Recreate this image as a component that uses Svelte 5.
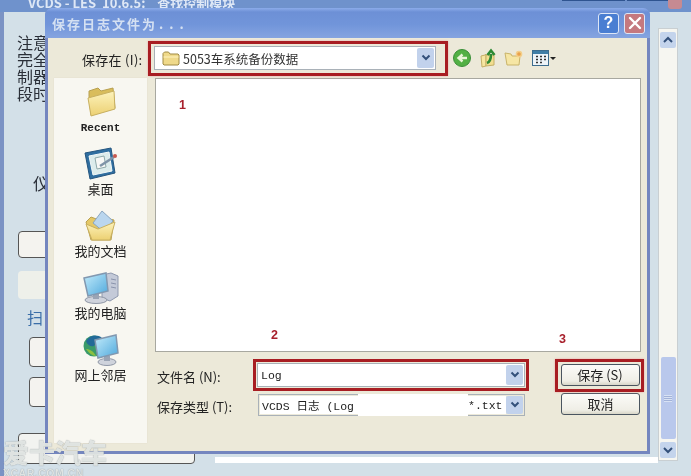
<script lang="ts">
  const places = [
    { id: "recent", label: "Recent" },
    { id: "desktop", label: "桌面" },
    { id: "docs", label: "我的文档" },
    { id: "pc", label: "我的电脑" },
    { id: "net", label: "网上邻居" },
  ]
</script>

<div class="screen">
  <!-- window behind the dialog -->
  <div class="backwin">
    <div class="backtitle">
      <span class="backname">VCDS - LES  10.6.5:    查找控制模块</span>
      <span class="backbtns"><i></i><i></i></span>
      <span class="backclose"></span>
    </div>
    <div class="backbody">
      <div class="backleft">
        <p class="note">注意<br />完全<br />制器<br />段时</p>
        <p class="instr">仪</p>
        <div class="bbtn first"></div>
        <div class="bbox"></div>
        <div class="scan">
          <span class="scanlabel">扫</span>
          <div class="bbtn small"></div>
          <div class="bbtn small"></div>
        </div>
        <div class="bottombtns">
          <div class="bbtn wide"></div>
          <div class="wide2"></div>
        </div>
      </div>
      <div class="vscroll">
        <div class="sbtn"><svg width="12" height="10" viewBox="0 0 12 10"><path d="M2 7 6 3l4 4" fill="none" stroke="#33507a" stroke-width="2"/></svg></div>
        <div class="strack"></div>
        <div class="sthumb"><span></span></div>
        <div class="sbtn"><svg width="12" height="10" viewBox="0 0 12 10"><path d="M2 3l4 4 4-4" fill="none" stroke="#33507a" stroke-width="2"/></svg></div>
      </div>
    </div>
  </div>

  <!-- save dialog -->
  <div class="dialog">
    <div class="dtitle">
      <span class="dname">保存日志文件为<span class="dots">...</span></span>
      <span class="help">?</span>
      <span class="close">
        <svg width="14" height="14" viewBox="0 0 14 14"><path d="M2 2l10 10M12 2 2 12" stroke="#fff" stroke-width="2.4" stroke-linecap="round"/></svg>
      </span>
    </div>
    <div class="client">
      <div class="toprow">
        <span class="savein">保存在 (I):</span>
        <div class="mark topmark">
          <div class="combo">
            <svg class="smallfolder" width="18" height="15" viewBox="0 0 18 15"><path d="M1 4V2.500L2.500 1h4L8 3h8l1 1v9l-1 1H2l-1-1z" fill="#efd98a" stroke="#a08a45"/><path d="M1.500 6h15" stroke="#fff3c0"/></svg>
            <span class="folder">5053车系统备份数据</span>
            <span class="arrow"><svg width="10" height="8" viewBox="0 0 10 8"><path d="M1.500 1.500 5 5l3.500-3.500" fill="none" stroke="#33507a" stroke-width="2"/></svg></span>
          </div>
        </div>
        <div class="tools">
          <svg width="20" height="20" viewBox="0 0 20 20"><circle cx="10" cy="10" r="8.500" fill="#52b044" stroke="#3a8f38"/><path d="M15 10H8m2.500-3.500L6.500 10l4 3.500" fill="none" stroke="#e8f4d8" stroke-width="2.400"/></svg>
          <svg width="20" height="20" viewBox="0 0 20 20"><path d="M3 8l4-1 1-1v12l-4 1z" fill="#f6e6a0" stroke="#c4ae66"/><path d="M8 7h8v10l-8 1z" fill="#f2de90" stroke="#c4ae66"/><path d="M9 15c3-1 4-4 4-9M9.500 7 13 2.500 16.500 7" fill="none" stroke="#2c8a34" stroke-width="2.600"/></svg>
          <svg width="20" height="18" viewBox="0 0 20 18"><path d="M1 4l6 1 1 2h8l-1 9H3z" fill="#f6e6a4" stroke="#c9b46a"/><circle cx="15" cy="5" r="2.600" fill="#e9a14a" stroke="#f4cf8a" stroke-width="1.500"/></svg>
          <span class="viewbtn">
            <svg width="17" height="16" viewBox="0 0 17 16"><rect x="0.500" y="0.500" width="16" height="15" fill="#eef4f8" stroke="#3c6c8e"/><rect x="1" y="1" width="15" height="3" fill="#3f7ea6"/><path d="M4 6.500h2m2 0h2m2 0h2M4 9.500h2m2 0h2m2 0h2M4 12.500h2m2 0h2" stroke="#333" stroke-width="1.400"/></svg>
            <b></b>
          </span>
        </div>
      </div>

      <div class="mainrow">
        <div class="sidebar">
          {#each places as place (place.id)}
            <div class="place">
              <svg width="36" height="33" viewBox="0 0 36 33">
                <defs>
                  <linearGradient id={`fold-${place.id}`} x1="0" y1="0" x2="0" y2="1">
                    <stop offset="0" stop-color="#fdf3bc" />
                    <stop offset="1" stop-color="#ecd072" />
                  </linearGradient>
                  <linearGradient id={`scr-${place.id}`} x1="0" y1="0" x2="1" y2="1">
                    <stop offset="0" stop-color="#c4ecfb" />
                    <stop offset="1" stop-color="#4ea8dc" />
                  </linearGradient>
                </defs>
                {#if place.id === "recent"}
                  <path d="M6 11 6 6l9-3 3 3 12-3 2 20-24 7z" fill="#d9bd5c" stroke="#b8a050"/>
                  <path d="M5 13 31 6l1 18-24 7z" fill={`url(#fold-${place.id})`} stroke="#c8b060"/>
                {:else if place.id === "desktop"}
                  <path d="M2 6 28 1l4 25-25 6z" fill="#2f6ea0" stroke="#24557f"/>
                  <path d="M6 9 26 5l3 19-19 4z" fill="#dcecec" stroke="#f2f8f8"/>
                  <path d="M12 11l9-2 2 11-9 2z" fill="#f7f8f6" stroke="#8fa9aa"/>
                  <path d="M17 19 31 10" stroke="#7f94a8" stroke-width="2.600"/>
                  <circle cx="32" cy="9" r="2" fill="#c8594f"/>
                {:else if place.id === "docs"}
                  <path d="M3 13 8 8l8 3 2-3 13 3-3 20H8z" fill="#e5c866" stroke="#b9a050"/>
                  <path d="M10 14 19 2l11 10-9 11z" fill="#bad6ee" stroke="#8aa6c0"/>
                  <path d="M3 15l12 5 17-7-5 18H9z" fill={`url(#fold-${place.id})`} stroke="#c8b060"/>
                {:else if place.id === "pc"}
                  <path d="M19 4l9-2 7 3v20l-8 5-8-3z" fill="#c4cad8" stroke="#8f99ae"/>
                  <path d="M28 8l5 1m-5 3 5 1m-5 3 5 1" stroke="#8a94ac"/>
                  <ellipse cx="13" cy="29" rx="11" ry="3.500" fill="#cfd3dc" stroke="#8f97a6"/>
                  <path d="M10 23h6v5h-6z" fill="#9aa4b4"/>
                  <path d="M1 7 23 2l2 18-20 5z" fill={`url(#scr-${place.id})`} stroke="#8298b0" stroke-width="1.500"/>
                {:else}
                  <circle cx="11" cy="13" r="10.500" fill="#3a9a6a"/>
                  <path d="M3 8c4-6 11-7 16-3-2 5-6 3-8 8-3 1-7-1-8-5z" fill="#226a98"/>
                  <path d="M3 16c3 4 6 7 10 7-3-5-6-7-10-7z" fill="#8cc040"/>
                  <ellipse cx="24" cy="29" rx="9" ry="3.500" fill="#cfd3dc" stroke="#8f97a6"/>
                  <path d="M21 23h6v5h-6z" fill="#9aa4b4"/>
                  <path d="M12 7 33 2l2 18-20 5z" fill={`url(#scr-${place.id})`} stroke="#8298b0" stroke-width="1.500"/>
                {/if}
              </svg>
              <span class:mono={place.id === "recent"}>{place.label}</span>
            </div>
          {/each}
        </div>

        <div class="rightcol">
          <div class="filelist"></div>
          <div class="form">
            <div class="fields">
              <span class="flabel">文件名 (N):</span>
              <div class="combo namecombo outlined">
                <span class="mono val">Log</span>
                <span class="arrow"><svg width="10" height="8" viewBox="0 0 10 8"><path d="M1.500 1.500 5 5l3.500-3.500" fill="none" stroke="#33507a" stroke-width="2"/></svg></span>
              </div>
              <span class="flabel">保存类型 (T):</span>
              <div class="combo typecombo">
                <span class="mono val">VCDS 日志 (Log</span>
                <span class="patch"></span>
                <span class="mono ext">*.txt</span>
                <span class="arrow"><svg width="10" height="8" viewBox="0 0 10 8"><path d="M1.500 1.500 5 5l3.500-3.500" fill="none" stroke="#33507a" stroke-width="2"/></svg></span>
              </div>
            </div>
            <div class="actions">
              <div class="mark savemark"><button class="xpbtn">保存 (S)</button></div>
              <button class="xpbtn">取消</button>
            </div>
          </div>
        </div>
      </div>
    </div>
  </div>

  <span class="num n1">1</span>
  <span class="num n2">2</span>
  <span class="num n3">3</span>

  <div class="watermark">
    <div class="wm1">爱卡汽车</div>
    <div class="wm2">XCAR.COM.CN</div>
  </div>
</div>

<style>
  :global(body) {
    margin: 0;
    background: #d3e0e8;
  }
  .screen {
    position: relative;
    width: 691px;
    height: 476px;
    overflow: hidden;
    font-family: "Noto Sans CJK SC", "Noto Sans", sans-serif;
    font-size: 12.500px;
    color: #222;
    filter: blur(0.4px);
  }
  .mono {
    font-family: "Liberation Mono", "Noto Sans CJK SC", monospace;
  }

  /* back window */
  .backwin {
    height: 476px;
    display: flex;
    flex-direction: column;
    background: #d3e0e8;
  }
  .backtitle {
    height: 12px;
    background: #6f92cc;
    display: flex;
    align-items: flex-end;
    flex: none;
    color: #dfe8f6;
    overflow: hidden;
  }
  .backname {
    padding-left: 28px;
    line-height: 14px;
    height: 15px;
    white-space: pre;
    font-size: 13px;
    font-weight: 700;
    transform: translateY(-1px);
  }
  .backbtns {
    position: absolute;
    left: 562px;
    top: 0;
    display: flex;
    gap: 2px;
  }
  .backbtns i {
    width: 63px;
    height: 1px;
    background: #2f5490;
  }
  .backbtns i + i {
    width: 44px;
  }
  .backclose {
    position: absolute;
    left: 668px;
    top: 0;
    width: 14px;
    height: 9px;
    background: #c68a92;
    border-radius: 0 0 3px 3px;
  }
  .backbody {
    flex: 1;
    display: flex;
    border-left: 4px solid #7b93c4;
    min-height: 0;
  }
  .backleft {
    width: 654px;
    padding: 22px 0 0 13px;
    box-sizing: border-box;
  }
  .note {
    margin: 0;
    font-size: 16px;
    line-height: 17px;
    color: #2a2f38;
  }
  .instr {
    margin: 71px 0 0 16px;
    font-size: 17px;
    line-height: 20px;
    color: #2a2f38;
  }
  .bbtn {
    background: #f4f3ef;
    border: 1px solid #555;
    border-radius: 4px;
    box-sizing: border-box;
  }
  .first {
    margin: 38px 0 0 1px;
    width: 100px;
    height: 27px;
  }
  .bbox {
    margin: 13px 0 0 1px;
    width: 100px;
    height: 28px;
    background: #eef0ea;
    border-radius: 4px;
  }
  .scan {
    margin: 8px 0 0 1px;
  }
  .scanlabel {
    display: block;
    margin-left: 9px;
    font-size: 16px;
    line-height: 20px;
    color: #3a6ea8;
  }
  .small {
    width: 60px;
    height: 30px;
    margin: 10px 0 0 11px;
  }
  .bottombtns {
    display: flex;
    gap: 20px;
    margin: 26px 0 0 1px;
  }
  .wide {
    width: 177px;
    height: 31px;
    background: #f2f3f0;
  }
  .wide2 {
    flex: 1;
    height: 6px;
    margin-top: 24px;
    background: #fff;
  }

  .vscroll {
    width: 20px;
    height: 433px;
    margin-top: 16px;
    background: #f6f6f1;
    border: 1px solid #c9cfd2;
    box-sizing: border-box;
    display: flex;
    flex-direction: column;
    align-items: center;
    padding: 3px 0;
  }
  .sbtn {
    width: 16px;
    height: 16px;
    background: #c4d4ec;
    display: flex;
    align-items: center;
    justify-content: center;
    flex: none;
    border-radius: 2px;
  }
  .strack {
    height: 309px;
    flex: none;
  }
  .sthumb {
    width: 15px;
    height: 82px;
    flex: none;
    background: #b9c8ec;
    border-radius: 2px;
    display: flex;
    align-items: center;
    justify-content: center;
    margin-bottom: 3px;
  }
  .sthumb span {
    width: 8px;
    height: 7px;
    background: repeating-linear-gradient(#d8e2f4 0 1px, #a2b2d8 1px 2px);
  }

  /* dialog */
  .dialog {
    position: absolute;
    left: 45px;
    top: 8px;
    width: 605px;
    height: 446px;
    border-radius: 7px 7px 0 0;
    background: #7486bf;
    padding: 0 3px 3px;
    box-sizing: border-box;
    display: flex;
    flex-direction: column;
  }
  .dtitle {
    height: 30px;
    flex: none;
    margin: 0 -3px;
    padding: 0 5px 0 7px;
    display: flex;
    align-items: center;
    gap: 5px;
    border-radius: 7px 7px 0 0;
    background: linear-gradient(#8cacea 0, #6d90d6 4px, #7195da 55%, #85a4e0 100%);
  }
  .dname {
    flex: 1;
    color: #d4e0f2;
    font-size: 13px;
    font-weight: 700;
    letter-spacing: 2px;
  }
  .dots {
    margin-left: 2px;
    letter-spacing: 6px;
  }
  .help,
  .close {
    width: 21px;
    height: 21px;
    border-radius: 3px;
    display: flex;
    align-items: center;
    justify-content: center;
    color: #fff;
    border: 1px solid #dde6f6;
    box-sizing: border-box;
  }
  .help {
    background: #4a7ed2;
    font: 700 16px "Liberation Sans", sans-serif;
  }
  .close {
    background: #c5797f;
  }
  .client {
    flex: 1;
    min-height: 0;
    background: #ece9d9;
    display: flex;
    flex-direction: column;
  }
  .toprow {
    height: 40px;
    flex: none;
    display: flex;
    align-items: center;
  }
  .savein {
    width: 100px;
    padding-left: 34px;
    box-sizing: border-box;
    font-size: 13px;
    letter-spacing: 0.300px;
    white-space: nowrap;
    transform: translateY(1px);
  }
  .mark {
    border: 3.500px solid #a81d22;
    box-shadow: 0 0 2px #e9a6a6;
    box-sizing: border-box;
  }
  .topmark {
    width: 300px;
    height: 35px;
    padding: 2px 9px 2px 3px;
    margin: 1px 0 0 0;
    background: #ece9d9;
  }
  .outlined {
    outline: 3.500px solid #a81d22;
    outline-offset: 1px;
  }
  .combo {
    height: 24px;
    background: #fff;
    border: 1px solid #a9b1b8;
    box-sizing: border-box;
    display: flex;
    align-items: center;
    padding: 1px;
  }
  .smallfolder {
    margin-left: 6px;
    flex: none;
  }
  .folder {
    flex: 1;
    margin-left: 3px;
    font-size: 12.500px;
    color: #333;
    white-space: nowrap;
  }
  .arrow {
    width: 17px;
    align-self: stretch;
    background: #c2d2ec;
    border-radius: 2px;
    display: flex;
    align-items: center;
    justify-content: center;
    flex: none;
  }
  .tools {
    display: flex;
    align-items: center;
    gap: 6px;
    margin-left: 4px;
  }
  .viewbtn {
    display: flex;
    align-items: center;
    gap: 1px;
    margin-left: 2px;
  }
  .viewbtn b {
    border: 3px solid transparent;
    border-top: 3px solid #222;
    border-bottom: 0;
  }
  .mainrow {
    flex: 1;
    min-height: 0;
    display: flex;
    padding-left: 6px;
  }
  .sidebar {
    width: 93px;
    flex: none;
    height: 365px;
    background: #f8f7f1;
    box-shadow: 0 0 1px #d8d5c4;
    padding-top: 7px;
    box-sizing: border-box;
  }
  .place {
    height: 62px;
    display: flex;
    flex-direction: column;
    align-items: center;
    font-size: 13px;
    line-height: 17px;
  }
  .place .mono {
    font-size: 11px;
    font-weight: 700;
    margin-top: 2px;
  }
  .rightcol {
    width: 486px;
    margin-left: 8px;
    flex: none;
  }
  .filelist {
    height: 274px;
    background: #fff;
    border: 1px solid #a8a8a0;
    box-sizing: border-box;
  }
  .form {
    display: flex;
    padding-top: 11px;
  }
  .fields {
    display: grid;
    grid-template-columns: 101px 267px;
    grid-template-rows: 24px 22px;
    row-gap: 7px;
    align-items: center;
    padding-left: 2px;
  }
  .flabel {
    font-size: 13px;
    white-space: nowrap;
    transform: translateY(1px);
  }
  .namecombo,
  .typecombo {
    background: #fff;
    font-size: 11.500px;
    height: 100%;
  }
  .namecombo {
    margin-left: -1px;
  }
  .val {
    flex: 1;
    padding-left: 2px;
    white-space: nowrap;
  }
  .typecombo {
    background: #ece9d9;
  }
  .typecombo .val {
    background: #fff;
    align-self: stretch;
    display: flex;
    align-items: center;
    flex: none;
    width: 96px;
  }
  .patch {
    width: 110px;
    align-self: stretch;
    background: #fff;
    margin: -2px 0;
    flex: none;
  }
  .ext {
    flex: 1;
    background: #fff;
    align-self: stretch;
    display: flex;
    align-items: center;
    white-space: nowrap;
    overflow: hidden;
  }
  .actions {
    margin-left: 36px;
    display: flex;
    flex-direction: column;
    gap: 7px;
    padding-top: 1px;
  }
  .savemark {
    margin: -5.500px -4.500px -5.500px -6.500px;
    padding: 2px 1px 3px 3px;
    width: fit-content;
    display: flex;
    background: #ece9d9;
    position: relative;
  }
  .xpbtn {
    width: 79px;
    height: 22px;
    padding: 0;
    background: linear-gradient(#fbfbf8, #efeee6 80%, #d8d6c8);
    border: 1px solid #4a5560;
    border-radius: 3px;
    font: inherit;
    font-size: 13px;
    line-height: 18px;
    color: #222;
  }

  /* annotations over the screenshot */
  .num {
    position: absolute;
    font: 700 12.500px "Liberation Sans", sans-serif;
    color: #a8202c;
  }
  .n1 {
    left: 179px;
    top: 98px;
  }
  .n2 {
    left: 271px;
    top: 328px;
  }
  .n3 {
    left: 559px;
    top: 332px;
  }
  .watermark {
    position: absolute;
    left: 3px;
    top: 435px;
    width: 110px;
    color: rgba(240, 243, 240, 0.85);
    text-shadow: 0 0 1px rgba(80, 90, 100, 0.7);
    pointer-events: none;
  }
  .wm1 {
    font-size: 26px;
    line-height: 33px;
    font-weight: 900;
    white-space: nowrap;
  }
  .wm2 {
    font: 700 10.500px/10px "Liberation Sans", sans-serif;
    letter-spacing: 0.500px;
    white-space: nowrap;
  }
</style>
